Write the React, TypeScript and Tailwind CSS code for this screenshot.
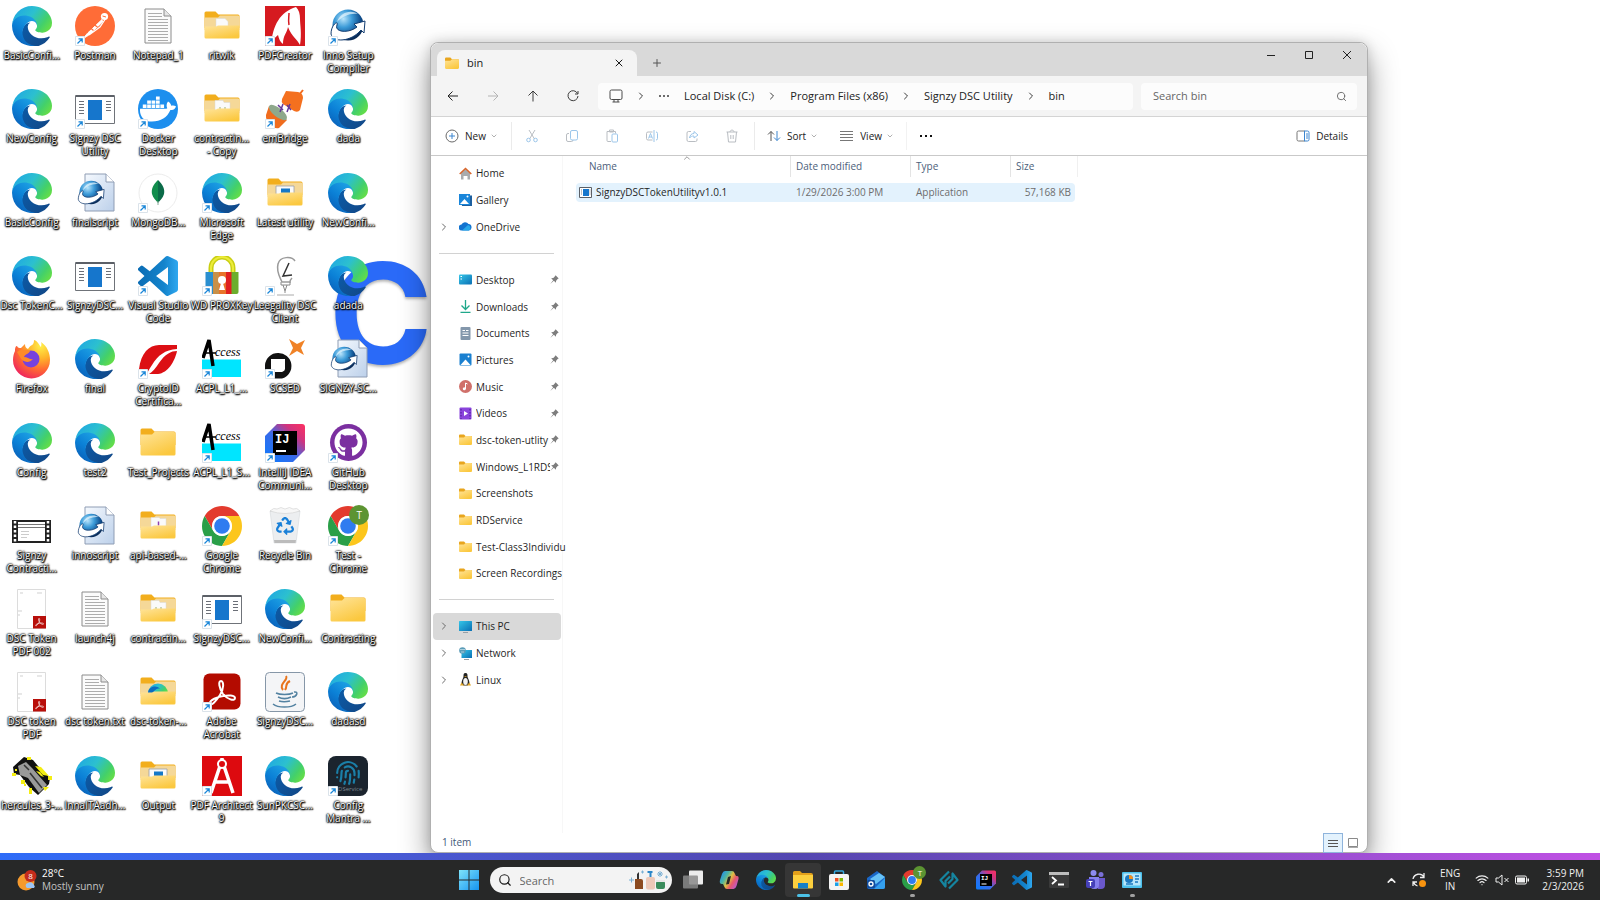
import React from "react";
import { FaDocker, FaGithub, FaRecycle } from "react-icons/fa";
import { Fingerprint, Search, X, Plus, Wifi, ChevronDown, ChevronRight, ChevronUp } from "lucide-react";

function Gradients() {
  return (
    <svg className="absolute size-0" aria-hidden="true">
      <defs>
        <linearGradient id="edgeDark" x1="0.2" y1="0" x2="1" y2="0.6">
          <stop offset="0" stopColor="#0c59a4" />
          <stop offset="1" stopColor="#114a8b" />
        </linearGradient>
        <linearGradient id="edgeMid" x1="0.8" y1="0.2" x2="0.3" y2="1">
          <stop offset="0" stopColor="#1b9de2" />
          <stop offset="0.5" stopColor="#0b80d6" />
          <stop offset="1" stopColor="#0a60b8" />
        </linearGradient>
        <linearGradient id="edgeTop" x1="0" y1="0.2" x2="1" y2="0.7">
          <stop offset="0" stopColor="#1fa7e4" />
          <stop offset="0.45" stopColor="#2cc0cf" />
          <stop offset="0.8" stopColor="#43d06a" />
          <stop offset="1" stopColor="#63dd4a" />
        </linearGradient>
        <linearGradient id="folder" x1="0" y1="0" x2="0.6" y2="1">
          <stop offset="0" stopColor="#ffe49a" />
          <stop offset="1" stopColor="#fbc83f" />
        </linearGradient>
        <linearGradient id="vscode" x1="0" y1="0" x2="1" y2="0">
          <stop offset="0" stopColor="#0a6cb4" />
          <stop offset="0.65" stopColor="#1484cc" />
          <stop offset="1" stopColor="#2fa8f0" />
        </linearGradient>
        <radialGradient id="fox" cx="0.75" cy="0.15" r="0.95">
          <stop offset="0" stopColor="#fff04a" />
          <stop offset="0.35" stopColor="#ffb42a" />
          <stop offset="0.65" stopColor="#ff6a32" />
          <stop offset="1" stopColor="#ee2260" />
        </radialGradient>
        <radialGradient id="globe" cx="0.35" cy="0.3" r="0.7">
          <stop offset="0" stopColor="#b8e4fb" />
          <stop offset="0.4" stopColor="#3c9bd8" />
          <stop offset="0.8" stopColor="#0e4c8c" />
          <stop offset="1" stopColor="#0a2c58" />
        </radialGradient>
        <linearGradient id="idea" x1="0" y1="1" x2="1" y2="0">
          <stop offset="0" stopColor="#0a7cff" />
          <stop offset="0.45" stopColor="#3a6ae8" />
          <stop offset="0.75" stopColor="#d0337e" />
          <stop offset="1" stopColor="#ff3060" />
        </linearGradient>
        <linearGradient id="page" x1="0" y1="0" x2="1" y2="1">
          <stop offset="0" stopColor="#f5f9fe" />
          <stop offset="1" stopColor="#bcd0ea" />
        </linearGradient>
        <linearGradient id="screen" x1="0" y1="0" x2="1" y2="1">
          <stop offset="0" stopColor="#35c6e8" />
          <stop offset="1" stopColor="#0a6fb4" />
        </linearGradient>
        <linearGradient id="win" x1="0" y1="0" x2="1" y2="1">
          <stop offset="0" stopColor="#7fe4fb" />
          <stop offset="1" stopColor="#1593f0" />
        </linearGradient>
        <linearGradient id="copilot" x1="0" y1="0.2" x2="1" y2="0.8">
          <stop offset="0" stopColor="#1d8df0" />
          <stop offset="0.3" stopColor="#4fb6a0" />
          <stop offset="0.5" stopColor="#e0c040" />
          <stop offset="0.7" stopColor="#e8586c" />
          <stop offset="1" stopColor="#b05ae0" />
        </linearGradient>
      </defs>
    </svg>
  );
}

function Svg({ box = 40, children }: { box?: number; children: React.ReactNode }) {
  return (
    <svg viewBox={`0 0 ${box} ${box}`} className="block size-full" fill="none" aria-hidden="true">
      {children}
    </svg>
  );
}

const edgePaths = (
  <>
    <path
      fill="url(#edgeDark)"
      d="M235.68 195.46a93.73 93.73 0 0 1-10.54 4.71 101.87 101.87 0 0 1-35.9 6.46c-47.32 0-88.54-32.55-88.54-74.32a31.48 31.48 0 0 1 16.43-27.31c-42.8 1.8-53.8 46.4-53.8 72.53 0 73.88 68.09 81.37 82.76 81.37 7.91 0 19.84-2.3 27-4.56l1.31-.44a128.34 128.34 0 0 0 66.6-52.8 4 4 0 0 0-5.32-5.64z"
    />
    <path
      fill="url(#edgeMid)"
      d="M105.73 241.42A79.2 79.2 0 0 1 83 220.08a80.72 80.72 0 0 1 29.5-120.75c3.12-1.47 8.45-4.13 15.54-4a32.35 32.35 0 0 1 25.69 13 31.88 31.88 0 0 1 6.36 18.66c0-.21 24.46-79.6-80-79.6-43.9 0-80 41.66-80 78.21a130.15 130.15 0 0 0 12.11 56 128 128 0 0 0 156.38 67.11 75.55 75.55 0 0 1-62.78-8z"
    />
    <path
      fill="url(#edgeTop)"
      d="M152.33 148.86c-.81 1.05-3.3 2.5-3.3 5.66 0 2.61 1.7 5.12 4.72 7.23 14.38 10 41.49 8.68 41.56 8.68a59.56 59.56 0 0 0 30.27-8.35A61.38 61.38 0 0 0 256 109.2c.26-22.41-8-37.31-11.34-43.91C223.46 23.84 177.72 0 128 0A128 128 0 0 0 0 126.2c.48-36.54 36.8-66.05 80-66.05 3.5 0 23.46.34 42 10.07 16.34 8.58 24.9 18.94 30.85 29.21 6.18 10.67 7.28 24.15 7.28 29.52 0 5.37-2.74 13.33-7.8 19.91z"
    />
  </>
);

const Edge = () => (
  <Svg box={256}>
    <circle cx="136" cy="134" r="58" fill="#fff" />
    {edgePaths}
  </Svg>
);

const EdgeBare = () => <Svg box={256}>{edgePaths}</Svg>;

const Postman = () => (
  <Svg>
    <circle cx="20" cy="20" r="20" fill="#ff6c37" />
    <circle cx="29.500" cy="10.500" r="3.600" fill="#fff" />
    <path d="M27 13.500 17 23c-3 3-5 4-8 9 4-2 6-4 9-7l9.500-9z" fill="#fff" stroke="#fff" />
    <path d="m15.500 22 3 2.500m1-5.500 3 2" stroke="#ff6c37" strokeWidth="1.200" />
    <path d="m31 12-6 9-11 8" stroke="#fff" strokeWidth="1.200" />
    <path d="m27.500 10 3.500 1" stroke="#ff6c37" />
  </Svg>
);

const TextFile = () => (
  <Svg>
    <path d="M7 3h19l7 7v27H7z" fill="#fbfbfb" stroke="#8c8c8c" />
    <path d="M26 3v7h7" fill="#e6e6e6" stroke="#8c8c8c" />
    <path
      d="M10 7.500h14M10 10.500h14M10 13.500h20M10 16.500h20M10 19.500h20M10 22.500h20M10 25.500h20M10 28.500h20M10 31.500h20M10 34.500h20"
      stroke="#a3a3a3"
      strokeWidth="0.900"
    />
  </Svg>
);

function Folder({ children }: { children?: React.ReactNode }) {
  return (
    <Svg>
      <path d="M2.500 7A1.500 1.500 0 0 1 4 5.500h9.500l3 3H36a1.500 1.500 0 0 1 1.500 1.500V22h-35z" fill="#f2ae1d" />
      {children ? (
        <>
          <path d="M2.500 11.500H16l2-2h18a1.500 1.500 0 0 1 1.500 1.500V24h-35z" fill="#f5d898" />
          {children}
          <path d="M2.500 20.500H14l2-1h21.500V31a1.500 1.500 0 0 1-1.500 1.500H4A1.500 1.500 0 0 1 2.500 31z" fill="url(#folder)" />
        </>
      ) : (
        <path
          d="M2.500 11.500H14L16.500 9H36a1.500 1.500 0 0 1 1.500 1.500V31a1.500 1.500 0 0 1-1.500 1.500H4A1.500 1.500 0 0 1 2.500 31z"
          fill="url(#folder)"
        />
      )}
    </Svg>
  );
}

const FolderPaper = () => (
  <Folder>
    <path d="M14 12.500h9l3 3V22H14z" fill="#fafafa" stroke="#d8d8d8" strokeWidth="0.500" />
  </Folder>
);

const FolderDocs = () => (
  <Folder>
    <path d="M13 11.500h8l1 2h6V22H13z" fill="#fafafa" stroke="#d8d8d8" strokeWidth="0.500" />
    <path d="M18 18v2M23 18v2" stroke="#9ab070" />
  </Folder>
);

const FolderApi = () => (
  <Folder>
    <path d="M13 11.500h8l1 1h6V22H13z" fill="#fafafa" stroke="#d8d8d8" strokeWidth="0.500" />
    <path d="M20.500 15.500v4" stroke="#9040b0" strokeWidth="1.500" />
  </Folder>
);

const FolderApp = () => (
  <Folder>
    <path d="M11 13h18v9H11z" fill="#fafafa" stroke="#9aa0a8" strokeWidth="0.800" />
    <path d="M16 15.500h9V22h-9z" fill="#1478c8" />
  </Folder>
);

const FolderEdge = () => (
  <Folder>
    <path d="M10 21.500a10 10 0 0 1 20 0z" fill="url(#edgeTop)" />
    <path d="M10 21.500c0-7 8-9 12-5-4 0-6 2-7 5z" fill="#0c6cc0" />
  </Folder>
);

const PdfCreator = () => (
  <Svg>
    <path d="M0 0h40v40H0z" fill="#d61a20" />
    <path
      d="M6 39C8 19 15 6 31 1c3 3 4 7 4 12s2 15 0 26c-3-6-8-8-12-18-1 6-5 8-5 17-3-2-4-5-5-9-4 3-5 6-7 10z"
      fill="#fff"
    />
    <path d="M24 19c-1-5 0-8 0-12" stroke="#d61a20" strokeWidth="1.500" />
  </Svg>
);

const globe = (
  <>
    <circle cx="20" cy="19" r="15.500" fill="url(#globe)" />
    <path d="M9 16c3-9 13-13 21-8-8-1-15 2-21 8z" fill="#e8f6fd" opacity="0.700" />
    <path d="M3 28C3 18 11 14 9 19c-3 7 11 9 20 2l-3-3 11-3-1 12-3-3C23 36 5 37 3 28z" fill="#fff" stroke="#123c70" />
  </>
);

const InnoSetup = () => <Svg>{globe}</Svg>;

const ScriptFile = () => (
  <Svg>
    <path d="M10 1h21l8 8v29H10z" fill="url(#page)" stroke="#8f9db4" />
    <path d="M31 1v8h8" fill="#fff" stroke="#8f9db4" />
    <g transform="translate(1 5) scale(0.760)">{globe}</g>
  </Svg>
);

const AppWindow = () => (
  <Svg>
    <path d="M.5 6.500h39v28H.5z" fill="#fff" stroke="#6f7379" />
    <path d="M1 6h38v2H1z" fill="#5c6067" />
    <path d="M13 11h14v20H13z" fill="#1676cc" />
    <path d="M4 12.500h5M4 15.500h5M4 18.500h5M4 21.500h5M4 24.500h5M31 12.500h5M31 15.500h5M31 18.500h5M31 21.500h5" stroke="#6c7078" />
  </Svg>
);

const SmallAppWindow = () => (
  <Svg box={13}>
    <path d="M.5 1.500h12v10H.5z" fill="#fff" stroke="#5c6067" />
    <path d="M4 3h6v7H4z" fill="#1676cc" />
    <path d="M2.500 3.500v6M11 3.500v5" stroke="#7c8088" strokeDasharray="1 1" />
  </Svg>
);

const Docker = () => (
  <div className="flex size-full items-center justify-center rounded-full bg-[#1d8fee] text-white">
    <FaDocker className="size-[36px]" />
  </div>
);

const Plug = () => (
  <Svg>
    <path d="m34 6 4-5" stroke="#f26a1e" strokeWidth="2" />
    <path d="m21 2 12 1q5 1 5 6l-3 12q-2 3-6 1L18 15q-2-2-1-5z" fill="#f4701f" />
    <path d="m4 17 18 14-8 8q-3 1-6-1-8-7-7-12z" fill="#f06c1e" />
    <ellipse cx="13" cy="23.500" rx="11" ry="4.500" transform="rotate(38 13 23.500)" fill="#8ea88c" />
    <path d="m13 16 5 5m-3 2 3-8m4 1 4 5m-4 2 3-8" stroke="#64389a" strokeWidth="1.500" />
  </Svg>
);

const Mongo = () => (
  <Svg>
    <circle cx="20" cy="20" r="19" fill="#fff" stroke="#ececec" />
    <path d="M20 7c-5 5-7 9-6 14 1 4 4 6 6 9z" fill="#118d4d" />
    <path d="M20 7c5 5 7 9 6 14-1 4-4 6-6 9z" fill="#0b6b48" />
    <path d="M20 28v4" stroke="#8aa89a" />
  </Svg>
);

const VsCode = () => (
  <Svg box={24}>
    <path
      fill="url(#vscode)"
      d="M23.15 2.587L18.21.21a1.494 1.494 0 0 0-1.705.29l-9.46 8.63-4.12-3.128a.999.999 0 0 0-1.276.057L.327 7.261A1 1 0 0 0 .326 8.74L3.899 12 .326 15.26a1 1 0 0 0 .001 1.479L1.65 17.94a.999.999 0 0 0 1.276.057l4.12-3.128 9.46 8.63a1.492 1.492 0 0 0 1.704.29l4.942-2.377A1.5 1.5 0 0 0 24 20.06V3.939a1.5 1.5 0 0 0-.85-1.352zm-5.146 14.861L10.826 12l7.178-5.448v10.896z"
    />
  </Svg>
);

const Padlock = () => (
  <Svg>
    <path d="M9 17v-5a11 11 0 0 1 22 0v5" stroke="#c9ce12" strokeWidth="5" />
    <path d="M9 16v-4a11 11 0 0 1 22 0v4" stroke="#ecec3a" strokeWidth="2" />
    <path d="M3.500 16H12v22H5q-1.500 0-1.500-2z" fill="#2a8fd0" />
    <path d="M11 16h6v22h-6z" fill="#c89048" />
    <path d="M17 16h7v22h-7z" fill="#e8742a" />
    <path d="M24 16h6v22h-6z" fill="#e02020" />
    <path d="M29.500 16h7v20q0 2-2 2h-5z" fill="#6cae2c" />
    <circle cx="20" cy="24" r="4" fill="#fff" />
    <path d="m20 24 3 10h-6z" fill="#fff" />
  </Svg>
);

const Leegality = () => (
  <Svg>
    <path d="M30 5C27 0 15 0 13 8c-2 8 2 13 4 18h8c0-1 1-3 2-4" stroke="#9a9a9a" strokeWidth="1.500" />
    <path d="m24 7-6 13 9-1" stroke="#333" strokeWidth="1.500" />
    <path d="M16 26v3h9v-3m-7 3 2 6 2-6m-2 6v2" stroke="#888" />
    <path d="M12 39h17" stroke="#aaa" />
  </Svg>
);

const Firefox = () => (
  <Svg>
    <path
      d="M3 12c0-4 1-5 2-5 1 2 2 2 4 2l4-4c0 3 1 4 3 5 3-5 6-3 6-9 4 1 5 5 7 7 0-2 1-3 0-5 6 4 9 11 9 18a18.500 18.500 0 0 1-37 0c0-4 1-7 2-9z"
      fill="url(#fox)"
    />
    <circle cx="19" cy="20" r="8.500" fill="#7542dd" />
    <path d="M5 13c5-3 9-3 13-1-1 3-5 3-6 6 4 0 5 3 9 2-4 5-11 3-13-2z" fill="#ff8a2a" />
  </Svg>
);

const CryptoId = () => (
  <Svg>
    <path d="M1 30C3 14 11 6 21 6h18v4c-12 1-19 6-25 16-2 3-4 6-5 9H1z" fill="#dc0f14" />
    <path d="M39 12c-6 0-12 3-18 12-3 5-7 9-10 11h9c10-1 17-13 19-23z" fill="#dc0f14" />
  </Svg>
);

const Access = () => (
  <Svg>
    <path d="M0 20.500h39V38H0z" fill="#00e5ff" />
    <path d="M1 19 7 1l4 26" stroke="#000" strokeWidth="3.500" />
    <path d="M1 14h13" stroke="#000" strokeWidth="1.500" />
    <text x="13" y="17" fontSize="12" fontStyle="italic" fontFamily="Liberation Serif, serif" fill="#000">
      ccess
    </text>
  </Svg>
);

const Scsed = () => (
  <Svg>
    <path
      fillRule="evenodd"
      d="M13 14a13 13 0 0 1 4 25.500H9V34H0v-8A13 13 0 0 1 13 14zM6 20v11q0 2 2 2h9q3-1 3-3V20z"
      fill="#111"
    />
    <path d="m24 0 8 5 8-4-4 8 3 7-7-4-8 5 4-8z" fill="#f08226" />
  </Svg>
);

const Idea = () => (
  <Svg>
    <path d="M0 13 12 1h25q3 0 3 3v23L28 39H3q-3 0-3-3z" fill="url(#idea)" />
    <path d="M8 8h24v24H8z" fill="#000" />
    <text x="10" y="20" fontSize="12" fontWeight="700" fontFamily="Liberation Mono, monospace" fill="#fff">
      IJ
    </text>
    <path d="M11 28h10" stroke="#fff" strokeWidth="2" />
  </Svg>
);

const GithubDesktop = () => (
  <div className="flex size-full items-center justify-center">
    <div className="flex size-[37px] items-center justify-center rounded-full bg-[#7b2fa0] text-white">
      <FaGithub className="size-[29px]" />
    </div>
  </div>
);

const VideoFile = () => (
  <Svg>
    <path d="M0 14h39v23H0z" fill="#222" />
    <path d="M6 16h27v19H6z" fill="#fff" />
    <path d="M6 18.500h27M6 21.500h27" stroke="#777" />
    <path d="M9 25.500h8M9 28.500h8M9 31.500h6" stroke="#ccc" />
    <path d="M3 15v21M36 15v21" stroke="#fff" strokeWidth="2.500" strokeDasharray="2.500 2" />
  </Svg>
);

const Chrome = () => (
  <Svg>
    <path d="M2.680 10A20 20 0 0 1 37.320 10H20A10 10 0 0 0 11.340 25z" fill="#e33b2e" />
    <path d="M2.680 10A20 20 0 0 0 20 40L28.660 25A10 10 0 0 1 11.340 25z" fill="#2a9f48" />
    <path d="M20 40A20 20 0 0 0 37.320 10H20A10 10 0 0 1 28.660 25z" fill="#fcc61c" />
    <circle cx="20" cy="20" r="10" fill="#fff" />
    <circle cx="20" cy="20" r="7.800" fill="#2f7cf0" />
  </Svg>
);

// Chrome with the signed-in profile's initial over it
const ChromeProfile = () => (
  <div className="relative size-full">
    <Chrome />
    <span className="absolute -top-px -right-px flex size-1/2 items-center justify-center rounded-full bg-[#5c9432] text-[10px] leading-none text-white">
      T
    </span>
  </div>
);

const ChromeTask = () => (
  <div className="relative size-full">
    <Chrome />
    <span className="absolute -top-1 -right-1 flex size-[13px] items-center justify-center rounded-full bg-[#5c9432] text-[8px] leading-none text-white">
      T
    </span>
  </div>
);

const RecycleBin = () => (
  <div className="relative flex size-full items-center justify-center">
    <Svg>
      <path d="M5 5h30l-4 32H9z" fill="#eceef0" stroke="#cfd3d6" strokeWidth="0.500" />
      <path d="M5 5q4-4 7-2 4-3 8 0 5-3 8 0 4-2 7 2-15 5-30 0z" fill="#f7f7f7" stroke="#c8c8c8" strokeWidth="0.500" />
      <path d="M9 34h22l-.5 3h-21z" fill="#bcbcbc" />
    </Svg>
    <FaRecycle className="absolute size-[18px] text-[#1a80d8]" />
  </div>
);

const acrobatMark = (
  <path
    d="M8 31c0-3 7-6 13-7 5-1 12-1 12 2 0 4-8 1-12-4-4-6-5-13-2-13s3 8-1 14-9 12-10 8z"
    stroke="#fff"
    strokeWidth="2"
  />
);

const PdfFile = () => (
  <Svg>
    <path d="M5.500.5h28v39h-28z" fill="#fff" stroke="#dcdcdc" />
    <path d="M8 4h3M25 4h5M6 22h4M6 26h2" stroke="#bbb" strokeWidth="0.700" />
    <path d="M21 27h13v12.500H21z" fill="#b80f0a" />
    <g transform="translate(21 26.500) scale(0.320)">{acrobatMark}</g>
  </Svg>
);

const Acrobat = () => (
  <Svg>
    <rect x="1.500" y="1.500" width="37" height="36" rx="6" fill="#b30b00" />
    {acrobatMark}
  </Svg>
);

const JavaFile = () => (
  <Svg>
    <rect x="0.500" y="0.500" width="39" height="39" rx="4" fill="#f4f5f7" stroke="#8697a8" />
    <path d="M21 4c3 4-8 8-3 14M25 9c-6 3-2 5-5 9" stroke="#e8741c" strokeWidth="2" />
    <path
      d="M11 21c4 2 13 2 17 0M13 25c4 2 9 2 13 0M14 29c3 1 7 1 11 0M29 20c5-1 3 5-2 5M8 32c5 4 18 4 23 0"
      stroke="#5382a1"
      strokeWidth="1.500"
    />
  </Svg>
);

const Hercules = () => (
  <Svg>
    <path d="m1 11 11-10 9 3 5 6 12 12-1 6-11 11-9-8-9-12-6-1z" fill="#111" />
    <path d="m6 10 8-4 6 6 15 17-8 8-11-15-8-3z" fill="#9a9a9a" />
    <path d="m12 9 5 5m1 3 12 15" stroke="#333" strokeWidth="1.500" />
    <path
      d="m23 10 6 1 8 9-6-1zM15 1h4v3h-4zM0 17h4v3H0zM3 13h2v2H3zM9 24h4v4H9zM31 31h6l-4 4zM36 20h4v4h-4zM17 32h3v6h-3zM12 28h2v2h-2zM24 15l4 1 4 5-3-1z"
      fill="#f4ee12"
    />
  </Svg>
);

const PdfArchitect = () => (
  <Svg>
    <path d="M0 0h40v40H0z" fill="#dd0a0f" />
    <path d="M20 2v4M18 10 9 37M22 10l9 27M12 26h16" stroke="#fff" strokeWidth="3.500" />
    <circle cx="20" cy="8" r="4" fill="#dd0a0f" stroke="#fff" strokeWidth="2" />
  </Svg>
);

const Mantra = () => (
  <div className="flex size-full flex-col items-center justify-center rounded-lg bg-[#1b242e]">
    <Fingerprint className="size-[26px] text-[#1b7fa8]" strokeWidth={2} />
    <span className="text-[6px] leading-[6px] text-[#7d8790]">RDService</span>
  </div>
);

interface DesktopItem {
  label: string;
  icon: () => React.ReactNode;
  shortcut?: boolean;
}

const desktopItems: DesktopItem[] = [
  { label: "BasicConfi...", icon: Edge },
  { label: "Postman", icon: Postman, shortcut: true },
  { label: "Notepad_1", icon: TextFile },
  { label: "ritwik", icon: FolderPaper },
  { label: "PDFCreator", icon: PdfCreator, shortcut: true },
  { label: "Inno Setup\nCompiler", icon: InnoSetup, shortcut: true },

  { label: "NewConfig", icon: Edge },
  { label: "Signzy DSC\nUtility", icon: AppWindow, shortcut: true },
  { label: "Docker\nDesktop", icon: Docker, shortcut: true },
  { label: "contractin...\n- Copy", icon: FolderDocs },
  { label: "emBridge", icon: Plug, shortcut: true },
  { label: "dada", icon: Edge },

  { label: "BasicConfig", icon: Edge },
  { label: "finalscript", icon: ScriptFile },
  { label: "MongoDB...", icon: Mongo, shortcut: true },
  { label: "Microsoft\nEdge", icon: Edge, shortcut: true },
  { label: "Latest utility", icon: FolderApp },
  { label: "NewConfi...", icon: Edge },

  { label: "Dsc TokenC...", icon: Edge },
  { label: "SignzyDSC...", icon: AppWindow },
  { label: "Visual Studio\nCode", icon: VsCode, shortcut: true },
  { label: "WD PROXKey", icon: Padlock, shortcut: true },
  { label: "Leegality DSC\nClient", icon: Leegality, shortcut: true },
  { label: "adada", icon: EdgeBare },

  { label: "Firefox", icon: Firefox },
  { label: "final", icon: Edge },
  { label: "CryptoID\nCertifica...", icon: CryptoId, shortcut: true },
  { label: "ACPL_L1_...", icon: Access, shortcut: true },
  { label: "SCSED", icon: Scsed, shortcut: true },
  { label: "SIGNZY-SC...", icon: ScriptFile },

  { label: "Config", icon: Edge },
  { label: "test2", icon: Edge },
  { label: "Test_Projects", icon: Folder },
  { label: "ACPL_L1_S...", icon: Access, shortcut: true },
  { label: "IntelliJ IDEA\nCommuni...", icon: Idea, shortcut: true },
  { label: "GitHub\nDesktop", icon: GithubDesktop, shortcut: true },

  { label: "Signzy\nContracti...", icon: VideoFile },
  { label: "innoscript", icon: ScriptFile },
  { label: "api-based-...", icon: FolderApi },
  { label: "Google\nChrome", icon: Chrome, shortcut: true },
  { label: "Recycle Bin", icon: RecycleBin },
  { label: "Test -\nChrome", icon: ChromeProfile, shortcut: true },

  { label: "DSC Token\nPDF 002", icon: PdfFile },
  { label: "launch4j", icon: TextFile },
  { label: "contractin...", icon: FolderDocs },
  { label: "SignzyDSC...", icon: AppWindow, shortcut: true },
  { label: "NewConfi...", icon: Edge },
  { label: "Contracting", icon: Folder },

  { label: "DSC token\nPDF", icon: PdfFile },
  { label: "dsc token.txt", icon: TextFile },
  { label: "dsc-token-...", icon: FolderEdge },
  { label: "Adobe\nAcrobat", icon: Acrobat, shortcut: true },
  { label: "SignzyDSC...", icon: JavaFile },
  { label: "dadasd", icon: Edge },

  { label: "hercules_3-...", icon: Hercules },
  { label: "InnaITAadh...", icon: Edge },
  { label: "Output", icon: FolderApp },
  { label: "PDF Architect\n9", icon: PdfArchitect, shortcut: true },
  { label: "SunPKCSC...", icon: Edge },
  { label: "Config\nMantra ...", icon: Mantra, shortcut: true },
];

function DesktopIcon({ item }: { item: DesktopItem }) {
  const Icon = item.icon;
  return (
    <button type="button" className="flex min-w-0 flex-col items-center pt-[6px]">
      <span className="relative block size-10 shrink-0">
        <Icon />
        {item.shortcut && (
          <svg viewBox="0 0 10 10" className="absolute bottom-0 left-0 size-[10px]" fill="none" aria-hidden="true">
            <path d="M.5.5h9v9h-9z" fill="#fff" stroke="#dbe3ea" />
            <path d="M2.500 7.500 7 3M3.500 2.800h3.700v3.700" stroke="#1a86d8" strokeWidth="1.200" />
          </svg>
        )}
      </span>
      <span className="mt-[3px] text-center text-[10px] leading-[13px] whitespace-pre text-white [text-shadow:0_0_1px_#000,0_0_2px_#000,0_0_2px_#000,1px_1px_1px_#000,0_1px_2px_#000]">
        {item.label}
      </span>
    </button>
  );
}

const Home = () => (
  <Svg box={13}>
    <path d="M2 6 6.500 2 11 6v6.500H8.500V9h-4v3.500H2z" fill="#a9abad" />
    <path d="M.7 7 6.500 1.500 12.300 7" stroke="#d9652a" strokeWidth="1.500" />
  </Svg>
);
const Gallery = () => (
  <Svg box={13}>
    <path d="M2 2.500h11V13H3z" fill="#1d5f9e" />
    <path d="M0 1h11v11H0z" fill="#1a86da" />
    <path d="m1 11 4.500-5L10 11z" fill="#fff" />
    <circle cx="8.500" cy="3.500" r="1" fill="#fff" />
  </Svg>
);
const OneDrive = () => (
  <Svg box={13}>
    <path d="M3 10.500a3 3 0 0 1-.5-6A4 4 0 0 1 9.500 4a3.300 3.300 0 0 1 .5 6.500z" fill="#1273d0" />
    <path d="M3 10.500 9 5a3 3 0 0 1 1 5.500z" fill="#28a8ea" />
  </Svg>
);
const DesktopGlyph = () => (
  <Svg box={13}>
    <rect y="1.500" width="13" height="10" rx="1" fill="url(#screen)" />
    <path d="M1.500 3.500H3M1.500 6H3" stroke="#fff" />
  </Svg>
);
const Download = () => (
  <Svg box={13}>
    <path d="M6.500 0v9M2.500 5.500l4 4 4-4M1.500 12.300h10" stroke="#1fa88a" strokeWidth="1.300" />
  </Svg>
);
const Documents = () => (
  <Svg box={13}>
    <rect x="1.500" width="10" height="13" rx="1" fill="#8397ab" />
    <path d="M3.500 3.500H6M3.500 6h6M3.500 8.500h6M7 3.500h2.500" stroke="#fff" />
  </Svg>
);
const Pictures = () => (
  <Svg box={13}>
    <rect x="0.500" y="0.500" width="12" height="12" rx="1" fill="#1a80d0" />
    <path d="m1.500 12 5-5.500 5 5.500z" fill="#fff" />
    <circle cx="9.500" cy="3.500" r="1" fill="#fff" />
  </Svg>
);
const Music = () => (
  <Svg box={13}>
    <circle cx="6.500" cy="6.500" r="6.500" fill="#d0706a" />
    <circle cx="5.300" cy="8.800" r="1.500" fill="#fff" />
    <path d="M6.500 9V3l2 1" stroke="#fff" />
  </Svg>
);
const Videos = () => (
  <Svg box={13}>
    <rect x="0.500" y="0.500" width="12" height="12" rx="1" fill="#8a44dc" />
    <path d="M2 2v10M11 2v10" stroke="#4c1c94" strokeDasharray="1.500 1.500" />
    <path d="m5 4 4 2.500L5 9z" fill="#fff" />
  </Svg>
);
const ThisPc = () => (
  <Svg box={13}>
    <rect y="1" width="13" height="10" rx="0.500" fill="url(#screen)" />
    <path d="M4 12.500h5" stroke="#98a0a8" />
  </Svg>
);
const Network = () => (
  <Svg box={13}>
    <rect x="2.500" y="3" width="10.500" height="8" fill="url(#screen)" />
    <path d="M5 12.500h5" stroke="#98a0a8" />
    <circle cx="3.500" cy="3.500" r="3.300" fill="#5a9cb8" />
    <path d="M1 2.500h5M2 5h3" stroke="#cde6ee" strokeWidth="0.700" />
  </Svg>
);
const Tux = () => (
  <Svg box={13}>
    <path
      d="M6.500 0C4.500 0 4.500 1.500 4.500 3.500 4.500 5 2.500 7 2.500 10.500l2 2h4l2-2C10.500 7 8.500 5 8.500 3.500 8.500 1.500 8.500 0 6.500 0z"
      fill="#222"
    />
    <ellipse cx="6.500" cy="8.500" rx="2.300" ry="3.500" fill="#f2f2f2" />
    <path d="M1 12.500 2.500 9.500l3 3zM12 12.500 10.500 9.500l-3 3zM5 3.200h3l-1.500 1z" fill="#dfa52a" />
  </Svg>
);
const SmallFolder = () => (
  <Svg box={13}>
    <path d="M0 2.500A1 1 0 0 1 1 1.500h4l1.500 1.500H12a1 1 0 0 1 1 1V8H0z" fill="#e8a51e" />
    <path d="M0 4.500h5L6.500 3H12a1 1 0 0 1 1 1v7a1 1 0 0 1-1 1H1a1 1 0 0 1-1-1z" fill="url(#folder)" />
  </Svg>
);

interface NavItem {
  label: string;
  icon: () => React.ReactNode;
  pinned?: boolean;
  expandable?: boolean;
  active?: boolean;
}

const navItems: (NavItem | null)[] = [
  { label: "Home", icon: Home },
  { label: "Gallery", icon: Gallery },
  { label: "OneDrive", icon: OneDrive, expandable: true },
  null,
  { label: "Desktop", icon: DesktopGlyph, pinned: true },
  { label: "Downloads", icon: Download, pinned: true },
  { label: "Documents", icon: Documents, pinned: true },
  { label: "Pictures", icon: Pictures, pinned: true },
  { label: "Music", icon: Music, pinned: true },
  { label: "Videos", icon: Videos, pinned: true },
  { label: "dsc-token-utlity", icon: SmallFolder, pinned: true },
  { label: "Windows_L1RDS", icon: SmallFolder, pinned: true },
  { label: "Screenshots", icon: SmallFolder },
  { label: "RDService", icon: SmallFolder },
  { label: "Test-Class3Individu", icon: SmallFolder },
  { label: "Screen Recordings", icon: SmallFolder },
  null,
  { label: "This PC", icon: ThisPc, expandable: true, active: true },
  { label: "Network", icon: Network, expandable: true },
  { label: "Linux", icon: Tux, expandable: true },
];

function Sidebar() {
  return (
    <nav className="w-[132px] shrink-0 border-r border-[#f7f7f7] pt-1">
      <ul className="flex h-[533px] flex-col">
        {navItems.map((item, i) =>
          item ? (
            <li key={item.label} className="flex min-h-0 flex-1">
              <a
                href="#"
                className={
                  item.active
                    ? "ml-[2px] flex w-[128px] items-center rounded-sm bg-[#d9d9d9] pl-[5px]"
                    : "ml-[2px] flex w-[128px] items-center pl-[5px]"
                }
              >
                <span className="w-[13px] shrink-0">
                  {item.expandable && <ChevronRight className="size-3 text-[#6b6b6b]" strokeWidth={2} />}
                </span>
                <span className="ml-2 size-[13px] shrink-0">
                  <item.icon />
                </span>
                <span
                  className={
                    item.pinned
                      ? "ml-1 min-w-0 flex-1 overflow-hidden text-[10px] leading-[16px] whitespace-nowrap text-[#1f1f1f]"
                      : "ml-1 min-w-0 flex-1 text-[10px] leading-[16px] whitespace-nowrap text-[#1f1f1f]"
                  }
                >
                  {item.label}
                </span>
                {item.pinned && (
                  <svg viewBox="0 0 10 10" className="mr-[2px] size-[9px] shrink-0" aria-hidden="true">
                    <path
                      d="M6.200.3 9.700 3.800l-1.200.7-1.700 1.800-.3 2.400L4.300 6.500.3 9.900 3.500 5.700 1.300 3.500l2.400-.3 1.800-1.700z"
                      fill="#7d7d7d"
                    />
                  </svg>
                )}
              </a>
            </li>
          ) : (
            <li key={i} className="flex min-h-0 flex-1 items-center">
              <hr className="ml-2 w-[115px] border-[#d2d2d2]" />
            </li>
          ),
        )}
      </ul>
    </nav>
  );
}

function TitleBar() {
  return (
    <div className="flex h-[33px] items-end rounded-t-lg bg-[#d9d9d9] pl-[6px]">
      <div className="flex h-[26px] w-[200px] items-center rounded-t-lg bg-[#f4f4f4] pr-3 pl-2 text-[11px] text-[#1a1a1a]">
        <span className="size-[14px]">
          <SmallFolder />
        </span>
        <span className="ml-2 flex-1">bin</span>
        <button type="button" aria-label="Close tab">
          <X className="size-3" strokeWidth={2} />
        </button>
      </div>
      <button type="button" aria-label="New tab" className="ml-[14px] pb-[7px] text-[#555]">
        <Plus className="size-3" strokeWidth={2} />
      </button>
      <div className="ml-auto flex h-full items-start gap-[26px] pt-[6px] pr-[14px] text-[#222]">
        <button type="button" aria-label="Minimize" className="size-3">
          <Svg box={12}>
            <path d="M2 6.500h8" stroke="currentColor" />
          </Svg>
        </button>
        <button type="button" aria-label="Maximize" className="size-3">
          <Svg box={12}>
            <path d="M2.500 2.500h7v7h-7z" stroke="currentColor" />
          </Svg>
        </button>
        <button type="button" aria-label="Close" className="size-3">
          <Svg box={12}>
            <path d="m2 2 8 8m0-8-8 8" stroke="currentColor" />
          </Svg>
        </button>
      </div>
    </div>
  );
}

const crumbs = ["Local Disk (C:)", "Program Files (x86)", "Signzy DSC Utility", "bin"];

function AddressBar() {
  return (
    <div className="flex h-[41px] items-center border-b border-[#d4d4d4] bg-[#f4f4f4] pr-[10px] pl-[15px] text-[#3c3c3c]">
      <div className="flex gap-[26px]">
        <button type="button" aria-label="Back" className="size-[14px] text-[#222]">
          <Svg box={14}>
            <path d="M12 7H2m4.500-4.500L2 7l4.500 4.500" stroke="currentColor" />
          </Svg>
        </button>
        <button type="button" aria-label="Forward" className="size-[14px] text-[#b4b4b4]">
          <Svg box={14}>
            <path d="M2 7h10M7.500 2.500 12 7l-4.500 4.500" stroke="currentColor" />
          </Svg>
        </button>
        <button type="button" aria-label="Up" className="size-[14px]">
          <Svg box={14}>
            <path d="M7 12.500V2M2.500 6.500 7 2l4.500 4.500" stroke="currentColor" />
          </Svg>
        </button>
        <button type="button" aria-label="Refresh" className="size-[14px]">
          <Svg box={14}>
            <path d="M11.500 4.500A5 5 0 1 0 12 7M12 2v3H9" stroke="currentColor" />
          </Svg>
        </button>
      </div>
      <div className="ml-[18px] flex h-[27px] flex-1 items-center gap-[15px] rounded bg-[#fcfcfc] pl-[11px] text-[11px] whitespace-nowrap">
        <span className="size-[14px]">
          <Svg box={14}>
            <rect x="1" y="1" width="12" height="9.500" rx="1.500" stroke="#4a4a4a" />
            <path d="M5 10.500V13m4-2.500V13M3.500 13h7" stroke="#4a4a4a" />
          </Svg>
        </span>
        <ChevronRight className="-mx-[3px] size-3" strokeWidth={2} />
        <button type="button" aria-label="More locations" className="size-[10px]">
          <Svg box={10}>
            <path d="M0 5h2m2 0h2m2 0h2" stroke="#3c3c3c" strokeWidth="1.300" />
          </Svg>
        </button>
        {crumbs.map((crumb, i) => (
          <React.Fragment key={crumb}>
            {i > 0 && <ChevronRight className="-mx-[3px] size-3" strokeWidth={2} />}
            <a href="#" className="text-[#222]">
              {crumb}
            </a>
          </React.Fragment>
        ))}
      </div>
      <label className="ml-2 flex h-[27px] w-[216px] items-center rounded bg-[#fcfcfc] pr-[10px] pl-3 text-[11px]">
        <input
          type="text"
          aria-label="Search bin"
          placeholder="Search bin"
          className="min-w-0 flex-1 bg-transparent outline-none placeholder:text-[#666]"
        />
        <Search className="size-[11px] text-[#666]" strokeWidth={2} />
      </label>
    </div>
  );
}

const editActions = [
  {
    name: "Cut",
    icon: (
      <>
        <path d="m4 1 5.500 9M10 1 4.500 10" stroke="#b9bdc2" />
        <circle cx="3.500" cy="11" r="1.800" stroke="#9cc6ea" />
        <circle cx="10.500" cy="11" r="1.800" stroke="#9cc6ea" />
      </>
    ),
  },
  {
    name: "Copy",
    icon: (
      <>
        <path d="M4 4.500H3a1.500 1.500 0 0 0-1.500 1.500v5A1.500 1.500 0 0 0 3 12.500h3.500A1.500 1.500 0 0 0 8 11" stroke="#b9bdc2" />
        <rect x="5.500" y="1.500" width="7" height="9.500" rx="1.500" stroke="#9cc6ea" />
      </>
    ),
  },
  {
    name: "Paste",
    icon: (
      <>
        <path d="M6 12.500H3A1 1 0 0 1 2 11.500v-9h8.500v2M4.500 1h4v2h-4z" stroke="#b9bdc2" />
        <rect x="7" y="5" width="5.500" height="8" rx="1" stroke="#9cc6ea" />
      </>
    ),
  },
  {
    name: "Rename",
    icon: (
      <>
        <path d="M7.500 3H3a1.500 1.500 0 0 0-1.500 1.500v5A1.500 1.500 0 0 0 3 11h4.500" stroke="#b9bdc2" />
        <path d="M9 1v12M11 3a1.500 1.500 0 0 1 1.500 1.500v5A1.500 1.500 0 0 1 11 11M3.500 9.500l2-5 2 5M4 8h3" stroke="#9cc6ea" />
      </>
    ),
  },
  {
    name: "Share",
    icon: (
      <>
        <path d="M6 2.500H3.500A1.500 1.500 0 0 0 2 4v7a1.500 1.500 0 0 0 1.500 1.500h7A1.500 1.500 0 0 0 12 11V9.500" stroke="#b9bdc2" />
        <path d="M4.500 9c.5-3 2-4.500 4.500-4.500v-2L13 6 9 9V7C7 7 5.500 7.500 4.500 9z" stroke="#9cc6ea" />
      </>
    ),
  },
  {
    name: "Delete",
    icon: <path d="M1.500 3h11M5 3c0-2.500 4-2.500 4 0M2.500 3l1 10h7l1-10M5.800 6v4M8.200 6v4" stroke="#b9bdc2" />,
  },
];

function Toolbar() {
  return (
    <div className="flex h-[39px] items-center border-b border-[#c9c9c9] text-[10px] text-[#222]">
      <button type="button" className="flex w-[80px] items-center pl-[14px]">
        <span className="size-[14px]">
          <Svg box={14}>
            <circle cx="7" cy="7" r="6" stroke="#6a6a6a" />
            <path d="M7 4v6M4 7h6" stroke="#3c86d0" />
          </Svg>
        </span>
        <span className="ml-[6px]">New</span>
        <ChevronDown className="ml-1 size-[8px] text-[#888]" />
      </button>
      <span className="h-7 w-px bg-[#ebebeb]" />
      <div className="flex">
        {editActions.map((action) => (
          <button key={action.name} type="button" aria-label={action.name} className="flex w-10 justify-center">
            <span className="size-[14px]">
              <Svg box={14}>{action.icon}</Svg>
            </span>
          </button>
        ))}
      </div>
      <span className="ml-[2px] h-7 w-px bg-[#ebebeb]" />
      <button type="button" className="ml-3 flex items-center">
        <span className="size-[14px]">
          <Svg box={14}>
            <path d="M4 12V2.500M1 5.500l3-3 3 3" stroke="#555" />
            <path d="M10 2v9.500M7 8.500l3 3 3-3" stroke="#3c86d0" />
          </Svg>
        </span>
        <span className="ml-[6px]">Sort</span>
        <ChevronDown className="ml-1 size-[8px] text-[#888]" />
      </button>
      <button type="button" className="ml-[22px] flex items-center">
        <span className="size-[14px]">
          <Svg box={14}>
            <path d="M0 2.500h13M0 5.500h13M0 8.500h13M0 11.500h13" stroke="#777" />
          </Svg>
        </span>
        <span className="ml-[6px]">View</span>
        <ChevronDown className="ml-1 size-[8px] text-[#888]" />
      </button>
      <span className="ml-3 h-7 w-px bg-[#f2f2f2]" />
      <button type="button" aria-label="See more" className="ml-3 size-[14px]">
        <Svg box={14}>
          <path d="M1 7h2m3 0h2m3 0h2" stroke="#111" strokeWidth="2" />
        </Svg>
      </button>
      <button type="button" className="mr-[19px] ml-auto flex items-center">
        <span className="size-[14px]">
          <Svg box={14}>
            <path d="M9 2H2.500A1.500 1.500 0 0 0 1 3.500v7A1.500 1.500 0 0 0 2.500 12H9" stroke="#777" />
            <path d="M8.500 2h3A1.500 1.500 0 0 1 13 3.500v7a1.500 1.500 0 0 1-1.500 1.500h-3zM10 5h2M10 7h2M10 9h2" stroke="#3c86d0" />
          </Svg>
        </span>
        <span className="ml-[6px]">Details</span>
      </button>
    </div>
  );
}

function FileList() {
  return (
    <div className="relative flex-1 pl-[13px]">
      <ChevronUp className="absolute -top-[3px] left-[119px] size-[10px] text-[#888]" />
      <table className="w-[502px] table-fixed border-separate border-spacing-0 text-left text-[10px] text-[#4c607a]">
        <thead>
          <tr className="h-[21px]">
            <th className="w-[215px] border-r border-[#e4e4e4] pl-[13px] font-normal">Name</th>
            <th className="w-[120px] border-r border-[#e4e4e4] pl-[5px] font-normal">Date modified</th>
            <th className="w-[100px] border-r border-[#e4e4e4] pl-[5px] font-normal">Type</th>
            <th className="w-[67px] border-r border-[#f0f0f0] pl-[5px] font-normal">Size</th>
          </tr>
        </thead>
        <tbody className="before:block before:h-[6px]">
          <tr className="h-[19px] text-[#6d6d6d]">
            <td className="rounded-l-sm bg-[#e3f2fd] pl-[3px] text-[#1f1f1f]">
              <span className="flex items-center">
                <span className="h-[13px] w-[13px]">
                  <SmallAppWindow />
                </span>
                <span className="ml-1">SignzyDSCTokenUtilityv1.0.1</span>
              </span>
            </td>
            <td className="bg-[#e3f2fd] pl-[5px]">1/29/2026 3:00 PM</td>
            <td className="bg-[#e3f2fd] pl-[5px]">Application</td>
            <td className="pr-[3px]">
              <div className="rounded-r-sm bg-[#e3f2fd] pr-1 text-right leading-[19px]">57,168 KB</div>
            </td>
          </tr>
        </tbody>
      </table>
    </div>
  );
}

function Explorer() {
  return (
    <section className="relative mt-[42px] mr-[232px] ml-[50px] flex min-w-0 flex-1 flex-col rounded-lg border border-[#b0b0b0] bg-white shadow-[0_14px_30px_rgba(0,0,0,0.42),0_0_12px_rgba(0,0,0,0.14)]">
      <TitleBar />
      <AddressBar />
      <Toolbar />
      <div className="flex flex-1">
        <Sidebar />
        <FileList />
      </div>
      <div className="flex h-[19px] items-center rounded-b-lg pr-1 pl-[11px] text-[10px] text-[#3f5878]">
        <span className="flex-1">1 item</span>
        <button type="button" aria-label="Details view" className="size-5 border border-[#8fb4dc] bg-[#e3f2fd]">
          <Svg box={18}>
            <path d="M4 6.500h10M4 9.500h10M4 12.500h10" stroke="#555" />
          </Svg>
        </button>
        <button type="button" aria-label="Large icons view" className="size-5">
          <Svg box={20}>
            <path d="M5.500 5.500h9v8h-9z" stroke="#8a8a8a" />
            <path d="M5 14.500h10" stroke="#aaa" />
          </Svg>
        </button>
      </div>
    </section>
  );
}

const TaskView = () => (
  <Svg box={20}>
    <rect x="6" y="0.500" width="14" height="14" rx="1" fill="#ececec" />
    <rect y="5.500" width="15" height="13" rx="1" fill="#8a8a8a" opacity="0.850" />
  </Svg>
);
const Copilot = () => (
  <Svg box={20}>
    <path
      d="M6 1h7q2 0 2.500 2L17 6h1q2 0 1.500 3l-2 7q-1 3-3 3H8q-2 0-2.500-2L4 14H3q-3 0-2-4l2-6q1-3 3-3z"
      fill="url(#copilot)"
    />
    <path d="m9 7 3-1-2 8-3 .5z" fill="#272727" />
  </Svg>
);
const ExplorerIcon = () => (
  <Svg box={20}>
    <path d="M0 2.500Q0 1 1.500 1H7l2 2h9q2 0 2 2v4H0z" fill="#e3a01a" />
    <path d="M0 5h20v12.500q0 1-1 1H1q-1 0-1-1z" fill="#fccf3e" />
    <path d="M5 13h10v5.500H5z" fill="#1680c8" />
  </Svg>
);
const Store = () => (
  <Svg box={20}>
    <path d="M5.500 5V2q0-1 1-1h7q1 0 1 1v3" stroke="#34a8e0" strokeWidth="1.500" />
    <rect y="4" width="20" height="16" rx="2" fill="#f4f4f4" />
    <path d="M6 8h3.500v3.500H6z" fill="#f05022" />
    <path d="M10.500 8H14v3.500h-3.500z" fill="#7cb900" />
    <path d="M6 12.500h3.500V16H6z" fill="#1aa0e8" />
    <path d="M10.500 12.500H14V16h-3.500z" fill="#fcb700" />
  </Svg>
);
const Outlook = () => (
  <Svg box={20}>
    <path d="M1 8 11 1l8 6v10q0 2-2 2H3q-2 0-2-2z" fill="#1a68c8" />
    <path d="m4 9 9-6 6 4-9 7z" fill="#66c2f6" />
    <path d="m8 19 11-11v9q0 2-2 2z" fill="#34a0ee" />
    <rect x="1" y="10" width="8" height="8" rx="1.500" fill="#104c9c" />
    <circle cx="5" cy="14" r="2" stroke="#fff" strokeWidth="1.300" />
  </Svg>
);
const SourceTool = () => (
  <Svg box={20}>
    <path d="M10 1.500 1.500 10l5 6.500V11L11 6.500" stroke="#1585a0" strokeWidth="2.200" strokeLinejoin="round" />
    <path d="m10 18.500 8.500-8.500-5-6.500V9L9 13.500" stroke="#1585a0" strokeWidth="2.200" strokeLinejoin="round" />
  </Svg>
);
const Terminal = () => (
  <Svg box={20}>
    <rect y="2" width="20" height="16" rx="1" fill="#3a3a3a" />
    <path d="M0 2h20v3H0z" fill="#bdbdbd" />
    <path d="m3 7 4 3.500L3 14M9 14.500h6" stroke="#fff" strokeWidth="1.800" />
  </Svg>
);
const Teams = () => (
  <Svg box={20}>
    <circle cx="7.500" cy="3" r="3" fill="#8d8cf0" />
    <circle cx="15" cy="4.500" r="2.500" fill="#7a70d8" />
    <path d="M12 8h7v7q0 4-4 4h-3z" fill="#6a58cc" />
    <path d="M3 7h10v8q0 4-4 4-6 0-6-5z" fill="#8580ee" />
    <rect y="9" width="9" height="9" rx="2" fill="#4540b8" />
    <path d="M2.500 11.500h4m-2 0v4.500" stroke="#fff" strokeWidth="1.200" />
  </Svg>
);
const ControlPanel = () => (
  <Svg box={20}>
    <rect y="2" width="20" height="16" rx="1" fill="#4cc0ec" />
    <path d="M1.500 3.500h17v12h-17z" fill="#b8e6fa" />
    <circle cx="7" cy="9" r="4" fill="#1a78c0" />
    <path d="M7 9V5a4 4 0 0 1 4 4z" fill="#f49020" />
    <path d="M13 6h4M13 9h4M13 12h3M4 14h7" stroke="#1a78c0" strokeWidth="1.300" />
  </Svg>
);

const taskbarApps = [
  { name: "Task view", icon: TaskView },
  { name: "Copilot", icon: Copilot },
  { name: "Microsoft Edge", icon: EdgeBare },
  { name: "File Explorer", icon: ExplorerIcon, state: "active" },
  { name: "Microsoft Store", icon: Store },
  { name: "Outlook", icon: Outlook },
  { name: "Google Chrome", icon: ChromeTask, state: "open" },
  { name: "Source tool", icon: SourceTool },
  { name: "IntelliJ IDEA", icon: Idea },
  { name: "Visual Studio Code", icon: VsCode },
  { name: "Terminal", icon: Terminal },
  { name: "Teams", icon: Teams },
  { name: "Control Panel", icon: ControlPanel, state: "open" },
];

function Taskbar() {
  return (
    <footer className="grid h-10 grid-cols-[1fr_auto_1fr] items-center bg-[#272828] text-[10px] leading-[13px] text-white">
      <button type="button" className="ml-4 flex items-center gap-[5px] text-left">
        <span className="size-[21px]">
          <Svg box={21}>
            <circle cx="10" cy="12" r="8.500" fill="#f59a2e" />
            <path d="M10 17a3 3 0 0 1 2-4 4 4 0 0 1 6 2 2 2 0 0 1 0 3h-7z" fill="#9cc4f4" />
            <circle cx="14.500" cy="6" r="6" fill="#c42b1c" />
            <text x="14.500" y="9" fontSize="8" textAnchor="middle" fill="#fff">
              8
            </text>
          </Svg>
        </span>
        <span>
          28°C
          <br />
          <span className="text-[#c4c4c4]">Mostly sunny</span>
        </span>
      </button>

      <div className="flex h-full items-center">
        <button type="button" aria-label="Start" className="flex w-[39px] justify-center">
          <span className="size-5">
            <Svg box={20}>
              <path d="M0 0h9.500v9.500H0zM10.500 0H20v9.500h-9.500zM0 10.500h9.500V20H0zM10.500 10.500H20V20h-9.500z" fill="url(#win)" />
            </Svg>
          </span>
        </button>
        <label className="mr-[3px] ml-px flex h-[26px] w-[182px] items-center rounded-full bg-[#f3f3f3] pr-1 pl-2">
          <Search className="size-[14px] shrink-0 text-[#1a1a1a]" strokeWidth={2} />
          <input
            type="text"
            aria-label="Search"
            placeholder="Search"
            className="ml-2 min-w-0 flex-1 bg-transparent text-[11px] outline-none placeholder:text-[#666]"
          />
          <svg viewBox="0 0 40 22" className="h-[22px] w-10 shrink-0" fill="none" aria-hidden="true">
            <path d="M7 10h6q2 0 2 2v8H7v-8q0-2 0-2z" fill="#8c4a20" />
            <path d="M9 10V5l2-2v7z" fill="#333" />
            <rect x="18" y="8" width="9" height="12.500" rx="2" fill="#ecc8b8" />
            <path d="M22.500 8V3m-3 0h5" stroke="#2a86c8" strokeWidth="2" />
            <rect x="28" y="12" width="9" height="8" rx="2" fill="#3a8c5c" />
            <path d="M28 12h9" stroke="#e8e8e8" strokeWidth="2" />
            <path
              d="M1 11h5M3.500 8.500v5M29 5h6m-3-3v6m-2-5 4 4m0-4-4 4M13 3h3m-1.500-1.500v3M37 8h3m-1.500-1.500v3"
              stroke="#7ab0d4"
            />
          </svg>
        </label>
        <div className="grid h-full w-[476px] grid-cols-13">
          {taskbarApps.map((app) => (
            <button
              key={app.name}
              type="button"
              aria-label={app.name}
              className={
                app.state === "active"
                  ? "relative my-[3px] ml-px flex items-center justify-center rounded bg-[#363636]"
                  : "relative my-[3px] flex items-center justify-center"
              }
            >
              <span className="size-5">
                <app.icon />
              </span>
              {app.state === "active" && <span className="absolute bottom-0 h-[3px] w-[13px] rounded-full bg-[#4cc2e8]" />}
              {app.state === "open" && <span className="absolute bottom-0 h-[3px] w-[5px] rounded-full bg-[#a0a0a0]" />}
            </button>
          ))}
        </div>
      </div>

      <div className="mr-4 flex items-center justify-end text-[#f0f0f0]">
        <ChevronUp className="size-[13px]" strokeWidth={3} />
        <span className="ml-[13px] size-4">
          <Svg box={16}>
            <path d="M2 7a6 6 0 0 1 11-2M13 1v4.500H9M2 14v-4h4M2.500 10a6 6 0 0 0 4 4" stroke="currentColor" strokeWidth="1.300" />
            <circle cx="11.500" cy="11.500" r="3.500" fill="#f8930f" />
          </Svg>
        </span>
        <span className="ml-[13px] text-center">
          ENG
          <br />
          IN
        </span>
        <Wifi className="ml-[15px] size-[14px]" strokeWidth={2} />
        <span className="ml-[6px] size-[14px]">
          <Svg box={14}>
            <path d="M1 5h2.500L7 2v10L3.500 9H1zM9.500 5l4 4m0-4-4 4" stroke="currentColor" />
          </Svg>
        </span>
        <span className="ml-[6px] size-[14px]">
          <Svg box={14}>
            <rect x="0.500" y="3" width="11" height="8" rx="1.500" stroke="currentColor" />
            <path d="M2 4.500h8v5H2zM12.500 5.500H14v3h-1.500z" fill="currentColor" />
          </Svg>
        </span>
        <span className="ml-[13px] text-right">
          3:59 PM
          <br />
          2/3/2026
        </span>
      </div>
    </footer>
  );
}

export default function App() {
  return (
    <div className="flex min-h-screen flex-col bg-white font-['Open_Sans','Noto_Sans',sans-serif]">
      <Gradients />
      <main className="relative flex flex-1 overflow-hidden">
        {/* wallpaper lettering, mostly behind the window */}
        <span className="absolute top-[229px] left-[329px] font-[Inter,sans-serif] text-[140px] leading-[168px] font-bold text-[#2a6af8] [text-shadow:0_2px_3px_rgba(0,0,0,0.3)]">
          C
        </span>
        <div className="relative grid w-[380px] shrink-0 grid-cols-6 grid-rows-10 pb-5">
          {desktopItems.map((item, i) => (
            <DesktopIcon key={i} item={item} />
          ))}
        </div>
        <Explorer />
      </main>
      <div className="h-[7px] bg-linear-to-r from-[#2e6cf8] via-[#5346b0] via-50% to-[#c050e4]" />
      <Taskbar />
    </div>
  );
}
